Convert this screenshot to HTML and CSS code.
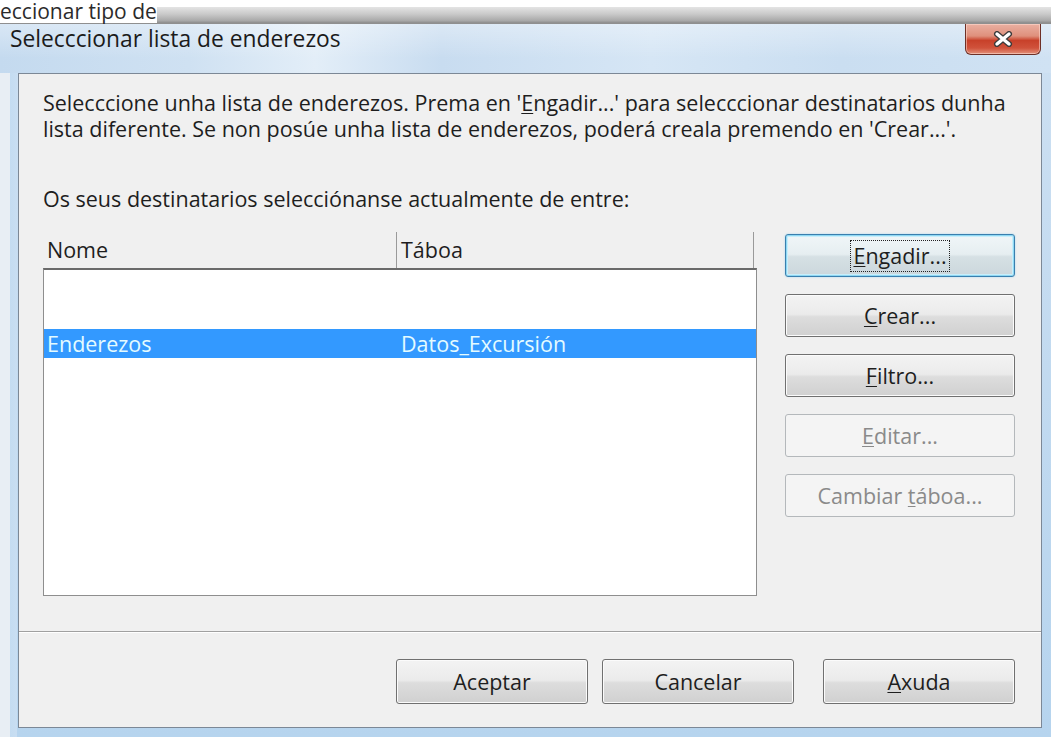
FILE: index.html
```html
<!DOCTYPE html>
<html lang="gl">
<head>
<meta charset="utf-8">
<title>Selecccionar lista de enderezos</title>
<link rel="stylesheet" href="styles.css">
</head>
<body>
  <div class="behind">
    <span class="behind-title">eccionar tipo de</span>
    <div class="behind-bar"></div>
  </div>

  <div class="dialog">
    <div class="titlebar">
      <span class="title">Selecccionar lista de enderezos</span>
      <button class="close" aria-label="Pechar">
        <svg width="22" height="16" viewBox="0 0 22 16">
          <path d="M5 3 L17 13 M17 3 L5 13" stroke="#3b3b3b" stroke-width="6" stroke-linecap="round"/>
          <path d="M5 3 L17 13 M17 3 L5 13" stroke="#ffffff" stroke-width="3.4" stroke-linecap="round"/>
        </svg>
      </button>
    </div>

    <div class="panel">
      <div class="content">
        <p class="intro">Selecccione unha lista de enderezos. Prema en '<u>E</u>ngadir...' para selecccionar destinatarios dunha<br>lista diferente. Se non posúe unha lista de enderezos, poderá creala premendo en 'Crear...'.</p>
        <p class="label">Os seus destinatarios selecciónanse actualmente de entre:</p>

        <div class="main">
          <div class="table">
            <div class="thead">
              <div class="th col-name">Nome</div>
              <div class="th col-table">Táboa</div>
            </div>
            <div class="tbody">
              <div class="row"></div>
              <div class="row"></div>
              <div class="row selected">
                <div class="td col-name">Enderezos</div>
                <div class="td col-table">Datos_Excursión</div>
              </div>
            </div>
          </div>

          <div class="side-buttons">
            <button class="btn default"><span class="focus"><u>E</u>ngadir...</span></button>
            <button class="btn"><span><u>C</u>rear...</span></button>
            <button class="btn"><span><u>F</u>iltro...</span></button>
            <button class="btn" disabled><span><u>E</u>ditar...</span></button>
            <button class="btn" disabled><span>Cambiar <u>t</u>áboa...</span></button>
          </div>
        </div>
      </div>

      <div class="footer">
        <button class="btn wide ok">Aceptar</button>
        <button class="btn wide cancel">Cancelar</button>
        <button class="btn wide"><span><u>A</u>xuda</span></button>
      </div>
    </div>
  </div>
</body>
</html>
```

FILE: styles.css
```css
* {
  box-sizing: border-box;
}

html,
body {
  margin: 0;
  padding: 0;
}

body {
  width: 1051px;
  height: 737px;
  overflow: hidden;
  background: #ffffff;
  font-family: "Open Sans", "Noto Sans", "DejaVu Sans", sans-serif;
  font-size: 21.5px;
  color: #1e1e1e;
}

u {
  text-decoration: underline;
  text-underline-offset: 2px;
  text-decoration-thickness: 1px;
}

/* window lying behind the dialog */
.behind {
  height: 24px;
  display: flex;
  align-items: flex-start;
  background: #ffffff;
  border-bottom: 1px solid #8f8f8f;
}

.behind-title {
  font-size: 21px;
  line-height: 22px;
  color: #2b2b2b;
  white-space: nowrap;
}

.behind-bar {
  flex: 1;
  height: 16px;
  margin-top: 7px;
  background: linear-gradient(#e4e4e4, #c9c9c9 45%, #a9a9a9 85%, #8c8c8c);
}

/* aero frame */
.dialog {
  height: 713px;
  display: flex;
  flex-direction: column;
  background:
    linear-gradient(90deg, #e8eef4 0, #e8eef4 10px, #c4dcf1 10px, #c9def2 17px, transparent 17px),
    linear-gradient(#cde0f2, #b6d4ee);
}

.titlebar {
  height: 49px;
  flex: none;
  display: flex;
  align-items: flex-start;
  justify-content: space-between;
  background:
    linear-gradient(rgba(255, 255, 255, 0.35), rgba(255, 255, 255, 0) 70%),
    linear-gradient(90deg, #c4daef 0%, #cfe1f2 18%, #e3eef8 30%, #c8dcf0 42%, #d6e6f5 62%, #cadef1 80%, #d0e2f3 100%);
}

.title {
  margin: 2px 0 0 10px;
  font-size: 22.8px;
  line-height: 26px;
  color: #1b1b1b;
}

.close {
  width: 76px;
  height: 31px;
  margin-right: 10px;
  padding: 0;
  border: 1px solid #6e3027;
  border-top: none;
  border-radius: 0 0 6px 6px;
  background: linear-gradient(#eab0a2 0%, #df907c 40%, #c8412a 55%, #d0523b 80%, #e3917a 100%);
  box-shadow: inset 0 0 0 1px rgba(255, 220, 210, 0.55);
  display: flex;
  align-items: center;
  justify-content: center;
}

.panel {
  flex: none;
  height: 655px;
  margin: 0 9px 0 18px;
  border: 1px solid #7c8896;
  background: #f0f0f0;
  display: flex;
  flex-direction: column;
}

.content {
  flex: 1;
  padding: 16px 26px 0 24px;
}

.intro {
  margin: 0;
  line-height: 26px;
  white-space: nowrap;
}

.label {
  margin: 45px 0 0;
  line-height: 24px;
  white-space: nowrap;
}

.main {
  margin-top: 21px;
  display: flex;
  align-items: flex-start;
  justify-content: space-between;
}

.table {
  width: 714px;
}

.thead {
  height: 36px;
  display: flex;
}

.th {
  height: 36px;
  line-height: 36px;
  padding-left: 4px;
  border-right: 1px solid #9a9a9a;
}

.thead .col-name {
  width: 354px;
}

.thead .col-table {
  width: 357px;
}

.tbody {
  height: 328px;
  background: #ffffff;
  border-top: 2px solid #6a6a6a;
  border-left: 1px solid #8e8e8e;
  border-right: 1px solid #8e8e8e;
  border-bottom: 1px solid #8e8e8e;
}

.row {
  height: 30px;
  display: flex;
}

.row.selected {
  height: 29px;
  margin-top: -1px;
  background: #3399ff;
  color: #e4fbff;
}

.td {
  line-height: 29px;
  padding-left: 3px;
  white-space: nowrap;
}

.tbody .col-name {
  width: 354px;
}

.side-buttons {
  width: 230px;
  margin-top: 2px;
  display: flex;
  flex-direction: column;
  gap: 17px;
}

/* push buttons */
.btn {
  height: 43px;
  padding: 0;
  display: flex;
  align-items: center;
  justify-content: center;
  font: inherit;
  color: #1e1e1e;
  border: 1px solid #707070;
  border-radius: 3px;
  background: linear-gradient(#f3f3f3 0%, #ebebeb 47%, #dddddd 53%, #d0d0d0 100%);
  box-shadow: inset 0 0 0 1px #fbfbfb;
}

.btn.default {
  border-color: #3a7fae;
  box-shadow: inset 0 0 0 1px #8fd8f3, inset 0 0 0 2px #c9eefb, 0 0 2px #9fd6ee;
  background: linear-gradient(#f0f6f8 0%, #e6eef1 47%, #d6e0e4 53%, #cbd7dc 100%);
}

.btn .focus {
  outline: 1px dotted #222;
  outline-offset: 2px;
  line-height: 26px;
}

.btn:disabled {
  color: #8a8a8a;
  border-color: #b4b8bb;
  background: #f4f4f4;
  box-shadow: none;
}

.footer {
  height: 96px;
  flex: none;
  border-top: 1px solid #a0a0a0;
  box-shadow: inset 0 1px 0 #ffffff;
  display: flex;
  justify-content: flex-end;
  align-items: flex-start;
  padding: 27px 26px 0 0;
}

.btn.wide {
  width: 192px;
  height: 45px;
}

.btn.ok {
  margin-right: 14px;
}

.btn.cancel {
  margin-right: 29px;
}
```
